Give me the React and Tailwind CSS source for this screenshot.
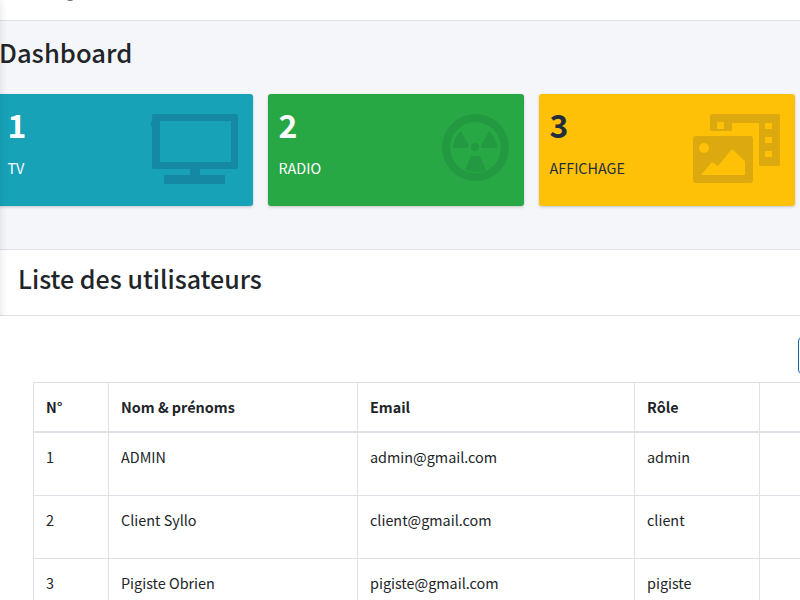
const font = { fontFamily: '"Noto Sans CJK SC", "Noto Sans", sans-serif' };

function TvIcon() {
  return (
    <svg width="87" height="70" viewBox="0 0 87 70" className="text-[#1589a3]" fill="currentColor">
      <path fillRule="evenodd" d="M3 0H85a2 2 0 0 1 2 2V53a2 2 0 0 1-2 2H49v6H39v-6H3a2 2 0 0 1-2-2V13L0 12V9L1 7V2a2 2 0 0 1 2-2zM9 7V48H80V7z" />
      <rect x="13" y="61" width="61" height="9" />
    </svg>
  );
}

function RadiationIcon() {
  return (
    <svg width="67" height="67" viewBox="0 0 67 67" className="text-[#239a41]" fill="currentColor">
      <path fillRule="evenodd" d="M33.5 0a33.5 33.5 0 1 1 0 67a33.5 33.5 0 0 1 0-67zM33.5 8a25.5 25.5 0 1 0 0 51a25.5 25.5 0 0 0 0-51z" />
      <circle cx="33" cy="33" r="4" />
      <path d="M19 17L27 32Q27 34 25 34H12Q10 34 11 31Q13 23 19 17z" />
      <path d="M47 17L39 32Q39 34 41 34H54Q56 34 55 31Q53 23 47 17z" />
      <path d="M29 42h9l6 14q-10 4-21 0z" />
    </svg>
  );
}

function MediaIcon() {
  return (
    <svg width="87" height="69" viewBox="0 0 87 69" className="text-[#dcaa0f]" fill="currentColor">
      <path fillRule="evenodd" d="M19 0H85a2 2 0 0 1 2 2V50a2 2 0 0 1-2 2H66V9H39V17H17V2a2 2 0 0 1 2-2zM24 8v7h7V8zM72 9v6h7V9zM72 23v6h7V23zM72 37v6h7V37z" />
      <path fillRule="evenodd" d="M3 22H57a3 3 0 0 1 3 3V66a3 3 0 0 1-3 3H3a3 3 0 0 1-3-3V25a3 3 0 0 1 3-3zM11 29a5 5 0 1 0 0 10a5 5 0 0 0 0-10zM8 61H52V47L39 35L25 52L19 48z" />
    </svg>
  );
}

function Card({ n, label, bg, text, children }) {
  return (
    <div className={`w-[256px] h-[112px] shrink-0 rounded-[3px] shadow-[0_1px_3px_rgba(0,0,0,0.2)] pl-[10.5px] pr-[15px] flex justify-between ${bg} ${text}`}>
      <div className="pt-[10px]">
        <div className="text-[32px] font-bold leading-[40px]">{n}</div>
        <div className="text-[14.4px] leading-[24px] mt-[12px]">{label}</div>
      </div>
      <div className="pt-[20px]">{children}</div>
    </div>
  );
}

const cols = ["w-[75px]", "w-[249px]", "w-[277px]", "w-[125px]", "w-[101px]"];

function Row({ cells, tall }) {
  return (
    <tr className={`${tall ? "h-[64px]" : "h-[63px]"} border-b border-[#dee2e6]`}>
      {cells.map((c, i) => (
        <td key={i} className="border-x border-[#dee2e6] px-3 align-top pt-[12px] text-[14.4px] leading-[24px] text-[#212529]">{c}</td>
      ))}
    </tr>
  );
}

export default function App() {
  return (
    <div style={font} className="relative w-[800px] h-[600px] overflow-hidden bg-[#f4f6f9] text-[#212529]">
      <div className="absolute -left-[10px] top-0 w-[10px] h-full shadow-[0_0_8px_rgba(0,0,0,0.12)]" />
      <div className="h-[21px] bg-white border-b border-[#dee2e6] overflow-hidden">
        <div className="pl-[66px] -mt-[21px] text-[14.4px] leading-[24px] text-[#6c757d]">g</div>
      </div>
      <h1 className="text-[25.6px] font-medium leading-[32px] pt-[15px] -ml-[1px] h-[51px] box-content pb-0">Dashboard</h1>
      <div className="flex gap-[15px] -ml-[3px] mt-[7px]">
        <Card n="1" label="TV" bg="bg-[#17a2b8]" text="text-white"><TvIcon /></Card>
        <Card n="2" label="RADIO" bg="bg-[#28a745]" text="text-white"><RadiationIcon /></Card>
        <Card n="3" label="AFFICHAGE" bg="bg-[#ffc107]" text="text-[#1f2d3d]"><MediaIcon /></Card>
      </div>
      <div className="mt-[43px] bg-white">
        <div className="h-[67px] border-y border-[#dee2e6] pl-[18px] pb-[10px] flex items-center">
          <h2 className="text-[25px] font-medium leading-[32px]">Liste des utilisateurs</h2>
        </div>
        <div className="relative pl-[33px] h-[300px] bg-white">
          <div className="absolute right-[-40px] top-[21px] w-[42px] h-[37px] border border-[#1c64a8] rounded-[4px]" />
          <table className="absolute top-[66px] left-[33px] w-[827px] border-collapse table-fixed border-t border-[#dee2e6]">
            <thead>
              <tr className="h-[49px] border-b-2 border-[#dee2e6]">
                {["N°", "Nom & prénoms", "Email", "Rôle", ""].map((h, i) => (
                  <th key={i} className={`${cols[i]} border-x border-[#dee2e6] px-3 text-left text-[14.4px] font-bold leading-[24px]`}>{h}</th>
                ))}
              </tr>
            </thead>
            <tbody>
              <Row tall cells={["1", "ADMIN", "admin@gmail.com", "admin", ""]} />
              <Row cells={["2", "Client Syllo", "client@gmail.com", "client", ""]} />
              <Row cells={["3", "Pigiste Obrien", "pigiste@gmail.com", "pigiste", ""]} />
            </tbody>
          </table>
        </div>
      </div>
    </div>
  );
}
